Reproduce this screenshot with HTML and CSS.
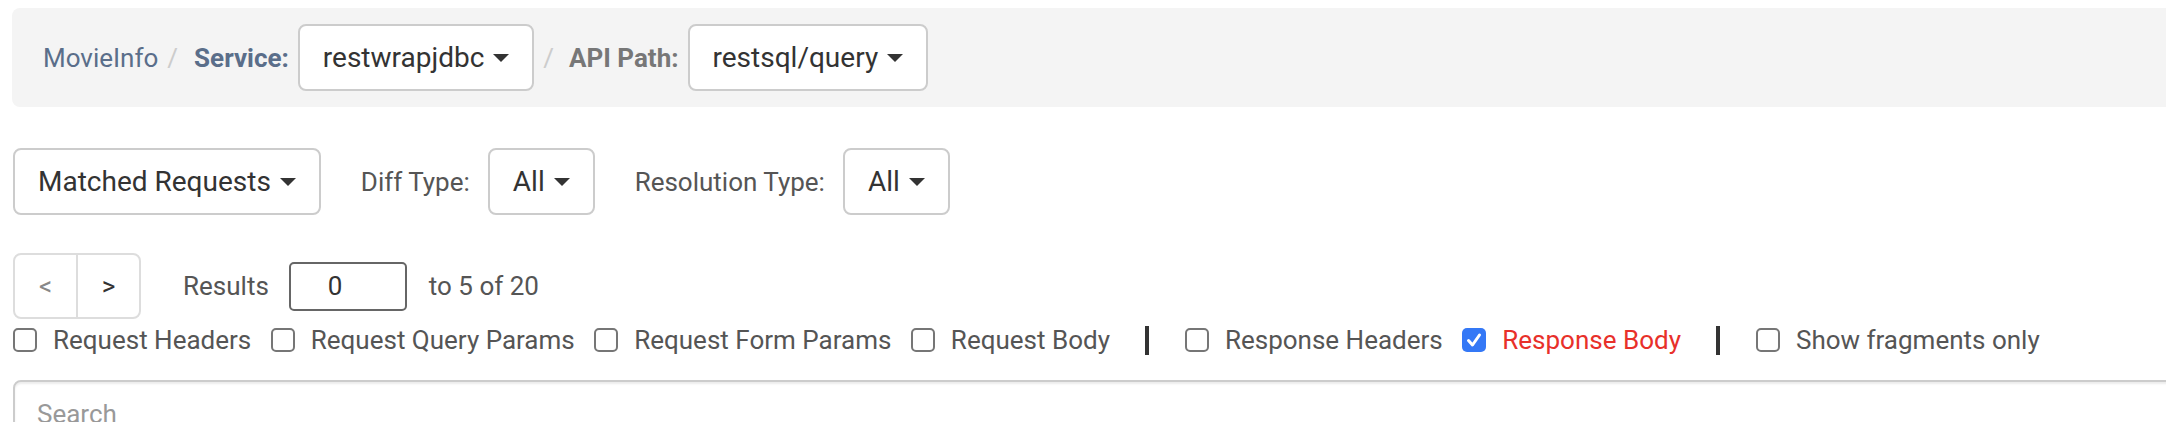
FILE: index.html
```html
<!DOCTYPE html>
<html lang="en">
<head>
<meta charset="utf-8">
<title>MovieInfo – restsql/query</title>
<link rel="stylesheet" href="styles.css">
</head>
<body>
<div class="page">
  <nav class="crumbs">
    <a class="crumb-link" href="#">MovieInfo</a>
    <span class="crumb-sep">/</span>
    <span class="crumb-label">Service:</span>
    <button class="btn btn-dd">restwrapjdbc <span class="caret"></span></button>
    <span class="crumb-sep">/</span>
    <span class="crumb-label muted">API Path:</span>
    <button class="btn btn-dd">restsql/query <span class="caret"></span></button>
  </nav>

  <div class="filters">
    <button class="btn">Matched Requests <span class="caret"></span></button>
    <span class="filter-label">Diff Type:</span>
    <button class="btn">All <span class="caret"></span></button>
    <span class="filter-label">Resolution Type:</span>
    <button class="btn">All <span class="caret"></span></button>
  </div>

  <div class="results">
    <div class="pager">
      <button class="pager-btn disabled">&lt;</button>
      <button class="pager-btn">&gt;</button>
    </div>
    <span class="results-label">Results</span>
    <input class="results-input" type="text" value="0">
    <span class="results-label">to 5 of 20</span>
  </div>

  <div class="checks">
    <label class="check"><span class="box"></span><span class="check-text">Request Headers</span></label>
    <label class="check"><span class="box"></span><span class="check-text">Request Query Params</span></label>
    <label class="check"><span class="box"></span><span class="check-text">Request Form Params</span></label>
    <label class="check"><span class="box"></span><span class="check-text">Request Body</span></label>
    <span class="divider"></span>
    <label class="check"><span class="box"></span><span class="check-text">Response Headers</span></label>
    <label class="check active"><span class="box checked"><svg viewBox="0 0 24 24" width="24" height="24"><path d="M6.5 12.5 L10.5 17 L17.5 7" fill="none" stroke="#fff" stroke-width="3" stroke-linecap="round" stroke-linejoin="round"/></svg></span><span class="check-text">Response Body</span></label>
    <span class="divider"></span>
    <label class="check"><span class="box"></span><span class="check-text">Show fragments only</span></label>
  </div>

  <div class="search">
    <input class="search-input" type="text" placeholder="Search">
  </div>
</div>
</body>
</html>
```

FILE: styles.css
```css
html, body {
  margin: 0;
  padding: 0;
  background: #ffffff;
  overflow: hidden;
}

body {
  font-family: Roboto, "Liberation Sans", Arial, sans-serif;
  color: #333333;
}

.page {
  padding: 8px 0 0 12px;
}

/* breadcrumb */
.crumbs {
  display: flex;
  align-items: center;
  height: 99px;
  box-sizing: border-box;
  padding: 0 31px;
  margin-right: -40px;
  background: #f4f4f4;
  border-radius: 8px;
  font-size: 26px;
}

.crumb-link {
  color: #5a6e8a;
  text-decoration: none;
}

.crumb-sep {
  color: #cccccc;
  margin: 0 16px 0 9px;
}

.crumb-label {
  font-weight: 700;
  color: #5a6e8a;
  margin-right: 9px;
}

.crumb-label.muted {
  color: #777777;
}

.btn-dd + .crumb-sep {
  margin-left: 9px;
  margin-right: 15px;
}

/* buttons */
.btn {
  display: inline-flex;
  align-items: center;
  height: 67px;
  box-sizing: border-box;
  padding: 0 23px;
  border: 2px solid #cccccc;
  border-radius: 8px;
  background: #ffffff;
  color: #333333;
  font-family: inherit;
  font-size: 28px;
  white-space: pre;
}

.caret {
  display: inline-block;
  width: 0;
  height: 0;
  margin-left: 2px;
  border-top: 8px solid #333333;
  border-left: 8px solid transparent;
  border-right: 8px solid transparent;
}

/* filters row */
.filters {
  display: flex;
  align-items: center;
  margin-top: 41px;
  padding-left: 1px;
}

.filter-label {
  font-size: 26px;
  color: #555555;
  margin: 0 18px 0 40px;
}

/* results row */
.results {
  display: flex;
  align-items: center;
  margin-top: 38px;
  padding-left: 1px;
  font-size: 26px;
}

.pager {
  display: flex;
  height: 66px;
}

.pager-btn {
  width: 65px;
  height: 66px;
  box-sizing: border-box;
  border: 2px solid #dddddd;
  background: #ffffff;
  color: #333333;
  font-family: inherit;
  font-size: 26px;
  padding: 0;
}

.pager-btn:first-child {
  border-radius: 8px 0 0 8px;
}

.pager-btn + .pager-btn {
  margin-left: -2px;
  border-radius: 0 8px 8px 0;
}

.pager-btn.disabled {
  color: #888888;
}

.results-label {
  color: #555555;
  margin-left: 42px;
}

.results-input + .results-label {
  margin-left: 22px;
}

.results-input {
  width: 118px;
  height: 49px;
  box-sizing: border-box;
  margin-left: 20px;
  padding: 0 0 0 37px;
  border: 2px solid #666666;
  border-radius: 5px;
  font-family: inherit;
  font-size: 26px;
  color: #333333;
}

/* checkbox row */
.checks {
  display: flex;
  align-items: center;
  gap: 19.5px;
  height: 42px;
  padding-left: 1px;
  font-size: 26px;
  color: #555555;
}

.check {
  display: flex;
  align-items: center;
  gap: 16px;
}

.box {
  display: block;
  width: 24px;
  height: 24px;
  box-sizing: border-box;
  border: 2px solid #767676;
  border-radius: 5px;
  background: #ffffff;
}

.box.checked {
  border: none;
  background: #3478f6;
}

.box svg {
  display: block;
}

.check.active .check-text {
  color: #e8302a;
}

.divider {
  width: 4px;
  height: 29px;
  background: #333333;
  margin: 0 16px;
}

/* search */
.search {
  margin-top: 19px;
  margin-right: -40px;
  padding-left: 1px;
}

.search-input {
  display: block;
  width: 100%;
  height: 68px;
  box-sizing: border-box;
  padding: 0 22px;
  border: 2px solid #cccccc;
  border-radius: 8px;
  box-shadow: inset 0 2px 2px rgba(0, 0, 0, 0.075);
  font-family: inherit;
  font-size: 26px;
  color: #333333;
}

.search-input::placeholder {
  color: #999999;
}
```
